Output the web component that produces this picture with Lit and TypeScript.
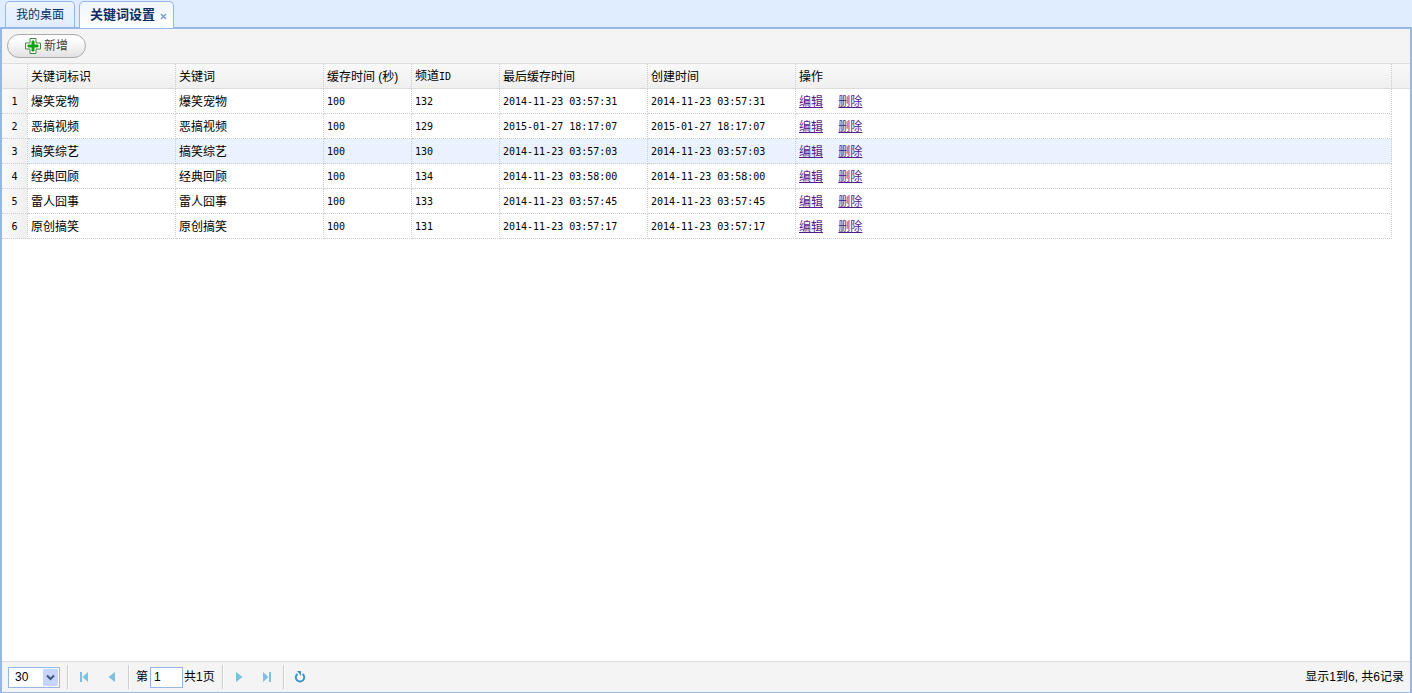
import { LitElement, html, css } from "lit";
import { customElement, state } from "lit/decorators.js";

interface Keyword {
  mark: string;
  word: string;
  ttl: number;
  channel: number;
  cached: string;
  created: string;
}

const ROWS: Keyword[] = [
  { mark: "爆笑宠物", word: "爆笑宠物", ttl: 100, channel: 132, cached: "2014-11-23 03:57:31", created: "2014-11-23 03:57:31" },
  { mark: "恶搞视频", word: "恶搞视频", ttl: 100, channel: 129, cached: "2015-01-27 18:17:07", created: "2015-01-27 18:17:07" },
  { mark: "搞笑综艺", word: "搞笑综艺", ttl: 100, channel: 130, cached: "2014-11-23 03:57:03", created: "2014-11-23 03:57:03" },
  { mark: "经典回顾", word: "经典回顾", ttl: 100, channel: 134, cached: "2014-11-23 03:58:00", created: "2014-11-23 03:58:00" },
  { mark: "雷人囧事", word: "雷人囧事", ttl: 100, channel: 133, cached: "2014-11-23 03:57:45", created: "2014-11-23 03:57:45" },
  { mark: "原创搞笑", word: "原创搞笑", ttl: 100, channel: 131, cached: "2014-11-23 03:57:17", created: "2014-11-23 03:57:17" },
];

@customElement("app-root")
export class AppRoot extends LitElement {
  @state() private selected = 2;

  static styles = css`
    :host {
      display: flex;
      flex-direction: column;
      box-sizing: border-box;
      min-height: 100vh;
      font: 12px/16px "Liberation Sans", "Noto Sans CJK SC", sans-serif;
      color: #000;
      background: #fff;
    }
    * { box-sizing: border-box; }
    button, input, select { font: inherit; color: inherit; margin: 0; }
    .tabs {
      display: flex;
      gap: 4px;
      height: 27px;
      padding: 1px 5px 0;
      background: #e0ecff;
    }
    .tab {
      display: flex;
      align-items: center;
      gap: 5px;
      padding: 0 10px;
      border: 1px solid #95b8e7;
      border-bottom: 0;
      border-radius: 5px 5px 0 0;
      background: linear-gradient(#eff5ff, #e0ecff);
      color: #0e2d5f;
      cursor: pointer;
    }
    .tab.active {
      margin-bottom: -1px;
      padding-right: 6px;
      background: linear-gradient(#eff5ff, #fff);
      font-size: 13px;
      font-weight: bold;
      position: relative;
    }
    .tab button { padding: 0; border: 0; background: none; }
    .tab .close { display: flex; padding-top: 2px; }
    .panel {
      flex: 1;
      display: flex;
      flex-direction: column;
      border: 2px solid #95b8e7;
      border-bottom-width: 1px;
    }
    .toolbar {
      height: 35px;
      padding: 5px;
      background: #f4f4f4;
      border-bottom: 1px solid #ddd;
    }
    .add {
      display: flex;
      align-items: center;
      gap: 3px;
      height: 24px;
      padding: 0 17px;
      border: 1px solid #aaa;
      border-radius: 12px;
      background: linear-gradient(#fff 20%, #e2e2e2);
      color: #444;
    }
    .grid { flex: 1; background: linear-gradient(#f9f9f9, #efefef) 0 0 / 100% 24px no-repeat, linear-gradient(#ddd, #ddd) 0 24px / 100% 1px no-repeat; }
    table {
      width: calc(100% - 18px);
      table-layout: fixed;
      border-collapse: separate;
      border-spacing: 0;
    }
    th, td {
      height: 25px;
      padding: 1px 3px 0;
      text-align: left;
      font-weight: normal;
      white-space: nowrap;
      border-right: 1px dotted #ccc;
      border-bottom: 1px dotted #ccc;
    }
    th { border-bottom: 1px solid #ddd; }
    .num, .mono { font-family: "DejaVu Sans Mono", monospace; font-size: 10px; }
    .num { text-align: center; padding: 1px 0 0; background: linear-gradient(90deg, #fafafa, #efefef); }
    .c-num { width: 26px; }
    .c-wide { width: 148px; }
    .c-small { width: 88px; }
    .selected td:not(.num) { background: #eaf2ff; }
    td a { color: #551a8b; margin-right: 12px; text-decoration: underline; text-underline-offset: 1px; }
    .pager {
      display: flex;
      align-items: center;
      height: 31px;
      padding: 0 6px;
      background: #f4f4f4;
      border-top: 1px solid #ddd;
    }
    .size { position: relative; display: flex; width: 52px; height: 21px; }
    .size select {
      appearance: none;
      width: 100%;
      padding: 0 6px;
      border: 1px solid #95b8e7;
      border-radius: 0;
      background: #fff;
    }
    .size svg { position: absolute; right: 2px; top: 2px; pointer-events: none; }
    .sep { width: 1px; height: 24px; margin: 0 7px; background: #ccc; box-shadow: 1px 0 #fff; }
    .nav { display: flex; align-items: center; justify-content: center; width: 18px; height: 24px; padding: 0; border: 0; background: none; }
    .navs { display: flex; gap: 10px; }
    .page { display: flex; align-items: center; gap: 2px; }
    .page input { width: 33px; height: 21px; padding: 0 3px; border: 1px solid #95b8e7; border-radius: 0; background: #fff; }
    .total { padding-left: 1px; }
    .info { margin-left: auto; }
  `;

  private row(r: Keyword, i: number) {
    return html`<tr class=${i === this.selected ? "selected" : ""} @click=${() => (this.selected = i)}>
      <td class="num">${i + 1}</td>
      <td>${r.mark}</td>
      <td>${r.word}</td>
      <td class="mono">${r.ttl}</td>
      <td class="mono">${r.channel}</td>
      <td class="mono">${r.cached}</td>
      <td class="mono">${r.created}</td>
      <td><a href="#edit">编辑</a> <a href="#delete">删除</a></td>
    </tr>`;
  }

  render() {
    return html`
      <nav class="tabs">
        <div class="tab"><button>我的桌面</button></div>
        <div class="tab active">
          <button>关键词设置</button>
          <button class="close" aria-label="关闭">
            <svg width="7" height="7" viewBox="0 0 7 7"><path d="M1 1l5 5M6 1L1 6" stroke="#7ba0cf" stroke-width="1.5" /></svg>
          </button>
        </div>
      </nav>
      <main class="panel">
        <div class="toolbar">
          <button class="add">
            <svg width="16" height="16" viewBox="0 0 16 16">
              <path d="M5 .5h6V5h4.500v6H11v4.500H5V11H.5V5H5z" fill="#fff" stroke="#3c8b3c" stroke-linejoin="round" />
              <path d="M7 3h2v4h4v2H9v4H7V9H3V7h4z" fill="#12a012" stroke="#12a012" />
            </svg>
            新增
          </button>
        </div>
        <div class="grid">
          <table>
            <colgroup>
              <col class="c-num" /><col class="c-wide" /><col class="c-wide" /><col class="c-small" />
              <col class="c-small" /><col class="c-wide" /><col class="c-wide" /><col />
            </colgroup>
            <thead>
              <tr>
                <th></th><th>关键词标识</th><th>关键词</th><th>缓存时间 (秒)</th>
                <th>频道<span class="mono">ID</span></th><th>最后缓存时间</th><th>创建时间</th><th>操作</th>
              </tr>
            </thead>
            <tbody>${ROWS.map((r, i) => this.row(r, i))}</tbody>
          </table>
        </div>
        <footer class="pager">
          <div class="size">
            <select aria-label="每页记录数"><option>30</option><option>50</option></select>
            <svg width="15" height="17" viewBox="0 0 15 17">
              <rect width="15" height="17" rx="1" fill="#c6d5fb" />
              <path d="M4 6.500l3.500 3.500L11 6.500" fill="none" stroke="#3f5681" stroke-width="2" />
            </svg>
          </div>
          <i class="sep"></i>
          <div class="navs">
            <button class="nav" aria-label="首页"><svg width="10" height="10" viewBox="0 0 10 10" fill="#7fbfe0"><path d="M1 0h2v10H1zM9 0v10L3.500 5z" /></svg></button>
            <button class="nav" aria-label="上一页"><svg width="8" height="10" viewBox="0 0 8 10" fill="#7fbfe0"><path d="M7 0v10L.5 5z" /></svg></button>
          </div>
          <i class="sep"></i>
          <label class="page">第<input .value=${"1"} /></label><span class="total">共1页</span>
          <i class="sep"></i>
          <div class="navs">
            <button class="nav" aria-label="下一页"><svg width="8" height="10" viewBox="0 0 8 10" fill="#7fbfe0"><path d="M1 0v10l6.500-5z" /></svg></button>
            <button class="nav" aria-label="末页"><svg width="10" height="10" viewBox="0 0 10 10" fill="#7fbfe0"><path d="M7 0h2v10H7zM1 0v10l5.500-5z" /></svg></button>
          </div>
          <i class="sep"></i>
          <button class="nav" aria-label="刷新">
            <svg width="12" height="12" viewBox="0 0 12 12"><path d="M8.500 3A4.200 4.200 0 1 1 3.500 3" fill="none" stroke="#3f97c9" stroke-width="2" /><path d="M3 0h4v5z" fill="#3f97c9" /></svg>
          </button>
          <span class="info">显示1到6, 共6记录</span>
        </footer>
      </main>
    `;
  }
}
